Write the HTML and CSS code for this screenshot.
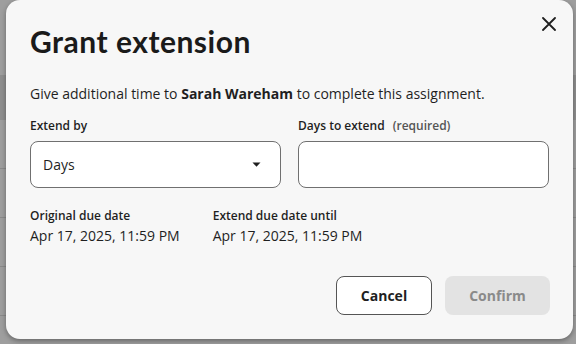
FILE: index.html
```html
<!DOCTYPE html>
<html lang="en">
<head>
<meta charset="utf-8">
<title>Grant extension</title>
<link rel="stylesheet" href="styles.css">
</head>
<body>
<div class="backdrop">
  <div class="dialog" role="dialog" aria-labelledby="dlg-title">
    <button class="close" aria-label="Close">
      <svg width="14" height="14" viewBox="0 0 14 14"><path d="M1 1L13 13M13 1L1 13" stroke="#1f1f1f" stroke-width="1.8" stroke-linecap="round"/></svg>
    </button>
    <h1 class="title" id="dlg-title">Grant extension</h1>
    <p class="intro">Give additional time to <strong>Sarah Wareham</strong> to complete this assignment.</p>
    <div class="fields">
      <div class="field">
        <label class="label">Extend by</label>
        <div class="select">
          <span>Days</span>
          <svg class="caret" width="9" height="5" viewBox="0 0 9 5"><path d="M0.5 0.5H8.5L4.5 4.8Z" fill="#1f1f1f"/></svg>
        </div>
      </div>
      <div class="field">
        <label class="label">Days to extend <span class="req">(required)</span></label>
        <div class="input"></div>
      </div>
    </div>
    <div class="dates">
      <div class="date">
        <div class="label">Original due date</div>
        <div class="value">Apr 17, 2025, 11:59 PM</div>
      </div>
      <div class="date">
        <div class="label">Extend due date until</div>
        <div class="value">Apr 17, 2025, 11:59 PM</div>
      </div>
    </div>
    <div class="actions">
      <button class="btn btn-cancel">Cancel</button>
      <button class="btn btn-confirm" disabled>Confirm</button>
    </div>
  </div>
</div>
</body>
</html>
```

FILE: styles.css
```css
html, body {
  margin: 0;
  padding: 0;
}
body {
  width: 576px;
  height: 344px;
  overflow: hidden;
  font-family: "Open Sans", "Noto Sans", sans-serif;
  color: #1f1f1f;
  background-color: #9e9e9e;
  background-image:
    linear-gradient(#8e8e8e, #8e8e8e),
    linear-gradient(#8a8a8a, #8a8a8a),
    linear-gradient(#8a8a8a, #8a8a8a),
    linear-gradient(#8a8a8a, #8a8a8a),
    linear-gradient(#8a8a8a, #8a8a8a);
  background-size: 100% 45px, 100% 1px, 100% 1px, 100% 1px, 100% 1px;
  background-position: 0 75px, 0 168px, 0 217px, 0 266px, 0 315px;
  background-repeat: no-repeat;
}
.backdrop {
  padding: 0 3px 0 6px;
}
.dialog {
  position: relative;
  box-sizing: border-box;
  width: 567px;
  height: 339px;
  background: #f7f7f7;
  border-radius: 14px;
  box-shadow: 0 2px 5px rgba(0, 0, 0, 0.35);
  padding: 21px 23px 0 24px;
}
.close {
  position: absolute;
  top: 17px;
  right: 17px;
  width: 14px;
  height: 14px;
  padding: 0;
  border: 0;
  background: none;
  display: flex;
}
.title {
  margin: 0;
  font-family: "Lato", "Inter", sans-serif;
  font-weight: 700;
  font-size: 30px;
  line-height: 40px;
  letter-spacing: 0.5px;
  color: #1a1a1a;
}
.intro {
  margin: 23px 0 0;
  font-size: 14px;
  line-height: 20px;
}
.intro strong {
  font-weight: 700;
}
.fields {
  display: grid;
  grid-template-columns: 251px 251px;
  gap: 17px;
  margin-top: 14px;
}
.field {
  display: flex;
  flex-direction: column;
}
.label {
  font-size: 12px;
  font-weight: 600;
  line-height: 16px;
  margin-bottom: 7px;
}
.req {
  font-size: 12px;
  color: #555;
  margin-left: 5px;
}
.select, .input {
  box-sizing: border-box;
  height: 47px;
  border: 1px solid #707070;
  border-radius: 8px;
  background: #fff;
}
.select {
  display: flex;
  align-items: center;
  justify-content: space-between;
  padding: 0 19px 0 12px;
  font-size: 14px;
}
.caret {
  display: block;
}
.dates {
  display: flex;
  gap: 33px;
  margin-top: 20px;
}
.date .label {
  margin-bottom: 2px;
}
.value {
  font-size: 14px;
  line-height: 20px;
}
.actions {
  display: flex;
  justify-content: flex-end;
  gap: 13px;
  margin-top: 30px;
}
.btn {
  box-sizing: border-box;
  height: 39px;
  border-radius: 8px;
  font-family: "Open Sans", "Noto Sans", sans-serif;
  font-size: 14px;
  font-weight: 700;
  padding: 0;
}
.btn-cancel {
  width: 96px;
  background: #fff;
  border: 1px solid #555;
  color: #1f1f1f;
}
.btn-confirm {
  width: 105px;
  background: #e3e3e3;
  border: 0;
  color: #8a8a8a;
}
```
